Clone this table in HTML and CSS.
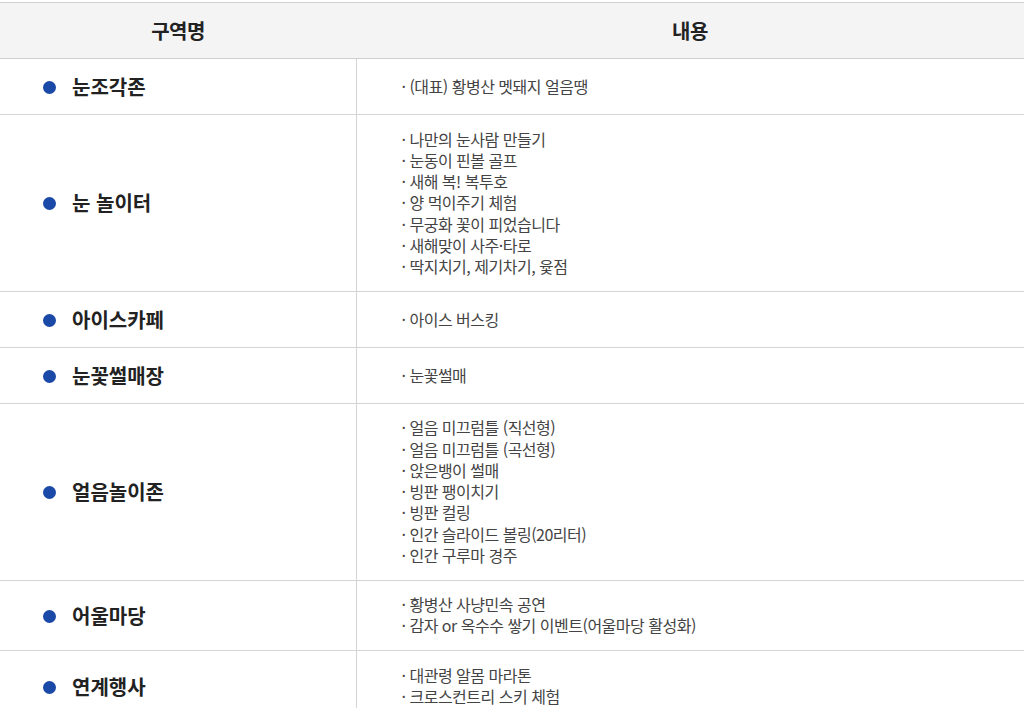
FILE: index.html
```html
<!DOCTYPE html>
<html lang="ko">
<head>
<meta charset="utf-8">
<title>구역 안내</title>
<link rel="stylesheet" href="styles.css">
</head>
<body>
<div class="wrap">
<table class="zones">
  <colgroup><col class="c-name"><col class="c-body"></colgroup>
  <thead>
    <tr><th>구역명</th><th>내용</th></tr>
  </thead>
  <tbody>
    <tr>
      <td class="name"><span class="dot"></span>눈조각존</td>
      <td class="body"><ul><li>(대표) 황병산 멧돼지 얼음땡</li></ul></td>
    </tr>
    <tr>
      <td class="name"><span class="dot"></span>눈 놀이터</td>
      <td class="body"><ul>
        <li>나만의 눈사람 만들기</li>
        <li>눈동이 핀볼 골프</li>
        <li>새해 복! 복투호</li>
        <li>양 먹이주기 체험</li>
        <li>무궁화 꽃이 피었습니다</li>
        <li>새해맞이 사주·타로</li>
        <li>딱지치기, 제기차기, 윷점</li>
      </ul></td>
    </tr>
    <tr>
      <td class="name"><span class="dot"></span>아이스카페</td>
      <td class="body"><ul><li>아이스 버스킹</li></ul></td>
    </tr>
    <tr>
      <td class="name"><span class="dot"></span>눈꽃썰매장</td>
      <td class="body"><ul><li>눈꽃썰매</li></ul></td>
    </tr>
    <tr>
      <td class="name"><span class="dot"></span>얼음놀이존</td>
      <td class="body"><ul>
        <li>얼음 미끄럼틀 (직선형)</li>
        <li>얼음 미끄럼틀 (곡선형)</li>
        <li>앉은뱅이 썰매</li>
        <li>빙판 팽이치기</li>
        <li>빙판 컬링</li>
        <li>인간 슬라이드 볼링(20리터)</li>
        <li>인간 구루마 경주</li>
      </ul></td>
    </tr>
    <tr>
      <td class="name"><span class="dot"></span>어울마당</td>
      <td class="body"><ul>
        <li>황병산 사냥민속 공연</li>
        <li>감자 or 옥수수 쌓기 이벤트(어울마당 활성화)</li>
      </ul></td>
    </tr>
    <tr>
      <td class="name"><span class="dot"></span>연계행사</td>
      <td class="body"><ul>
        <li>대관령 알몸 마라톤</li>
        <li>크로스컨트리 스키 체험</li>
      </ul></td>
    </tr>
  </tbody>
</table>
</div>
</body>
</html>
```

FILE: styles.css
```css
html, body {
  margin: 0;
  padding: 0;
  background: #fff;
}
body {
  font-family: "Noto Sans CJK KR", "Noto Sans", sans-serif;
  color: #444;
}
.wrap {
  padding-top: 2px;
}
.zones {
  width: 1024px;
  border-collapse: collapse;
  table-layout: fixed;
}
.c-name { width: 356px; }
.zones thead th {
  background: #f4f4f4;
  border-top: 1px solid #cfcfcf;
  border-bottom: 1px solid #cfcfcf;
  height: 55px;
  padding: 0;
  font-size: 20px;
  font-weight: 700;
  letter-spacing: -0.5px;
  color: #222;
  text-align: center;
  vertical-align: middle;
}
.zones tbody td {
  border-bottom: 1px solid #d4d4d4;
  vertical-align: middle;
}
.zones td.name {
  border-right: 1px solid #d4d4d4;
  padding: 12px 0 12px 43px;
  height: 31px;
  line-height: 31px;
  font-size: 20px;
  font-weight: 700;
  color: #222;
  white-space: nowrap;
}
.dot {
  display: inline-block;
  width: 13px;
  height: 13px;
  border-radius: 50%;
  background: #1b49a8;
  margin-right: 16px;
  vertical-align: 1px;
}
.zones td.body {
  padding: 13.7px 0 13.7px 45px;
  font-size: 16px;
  line-height: 21.2px;
  letter-spacing: -0.5px;
  color: #444;
}
.body ul {
  list-style: none;
  margin: 0;
  padding: 0;
}
.body li::before {
  content: "· ";
}
```
